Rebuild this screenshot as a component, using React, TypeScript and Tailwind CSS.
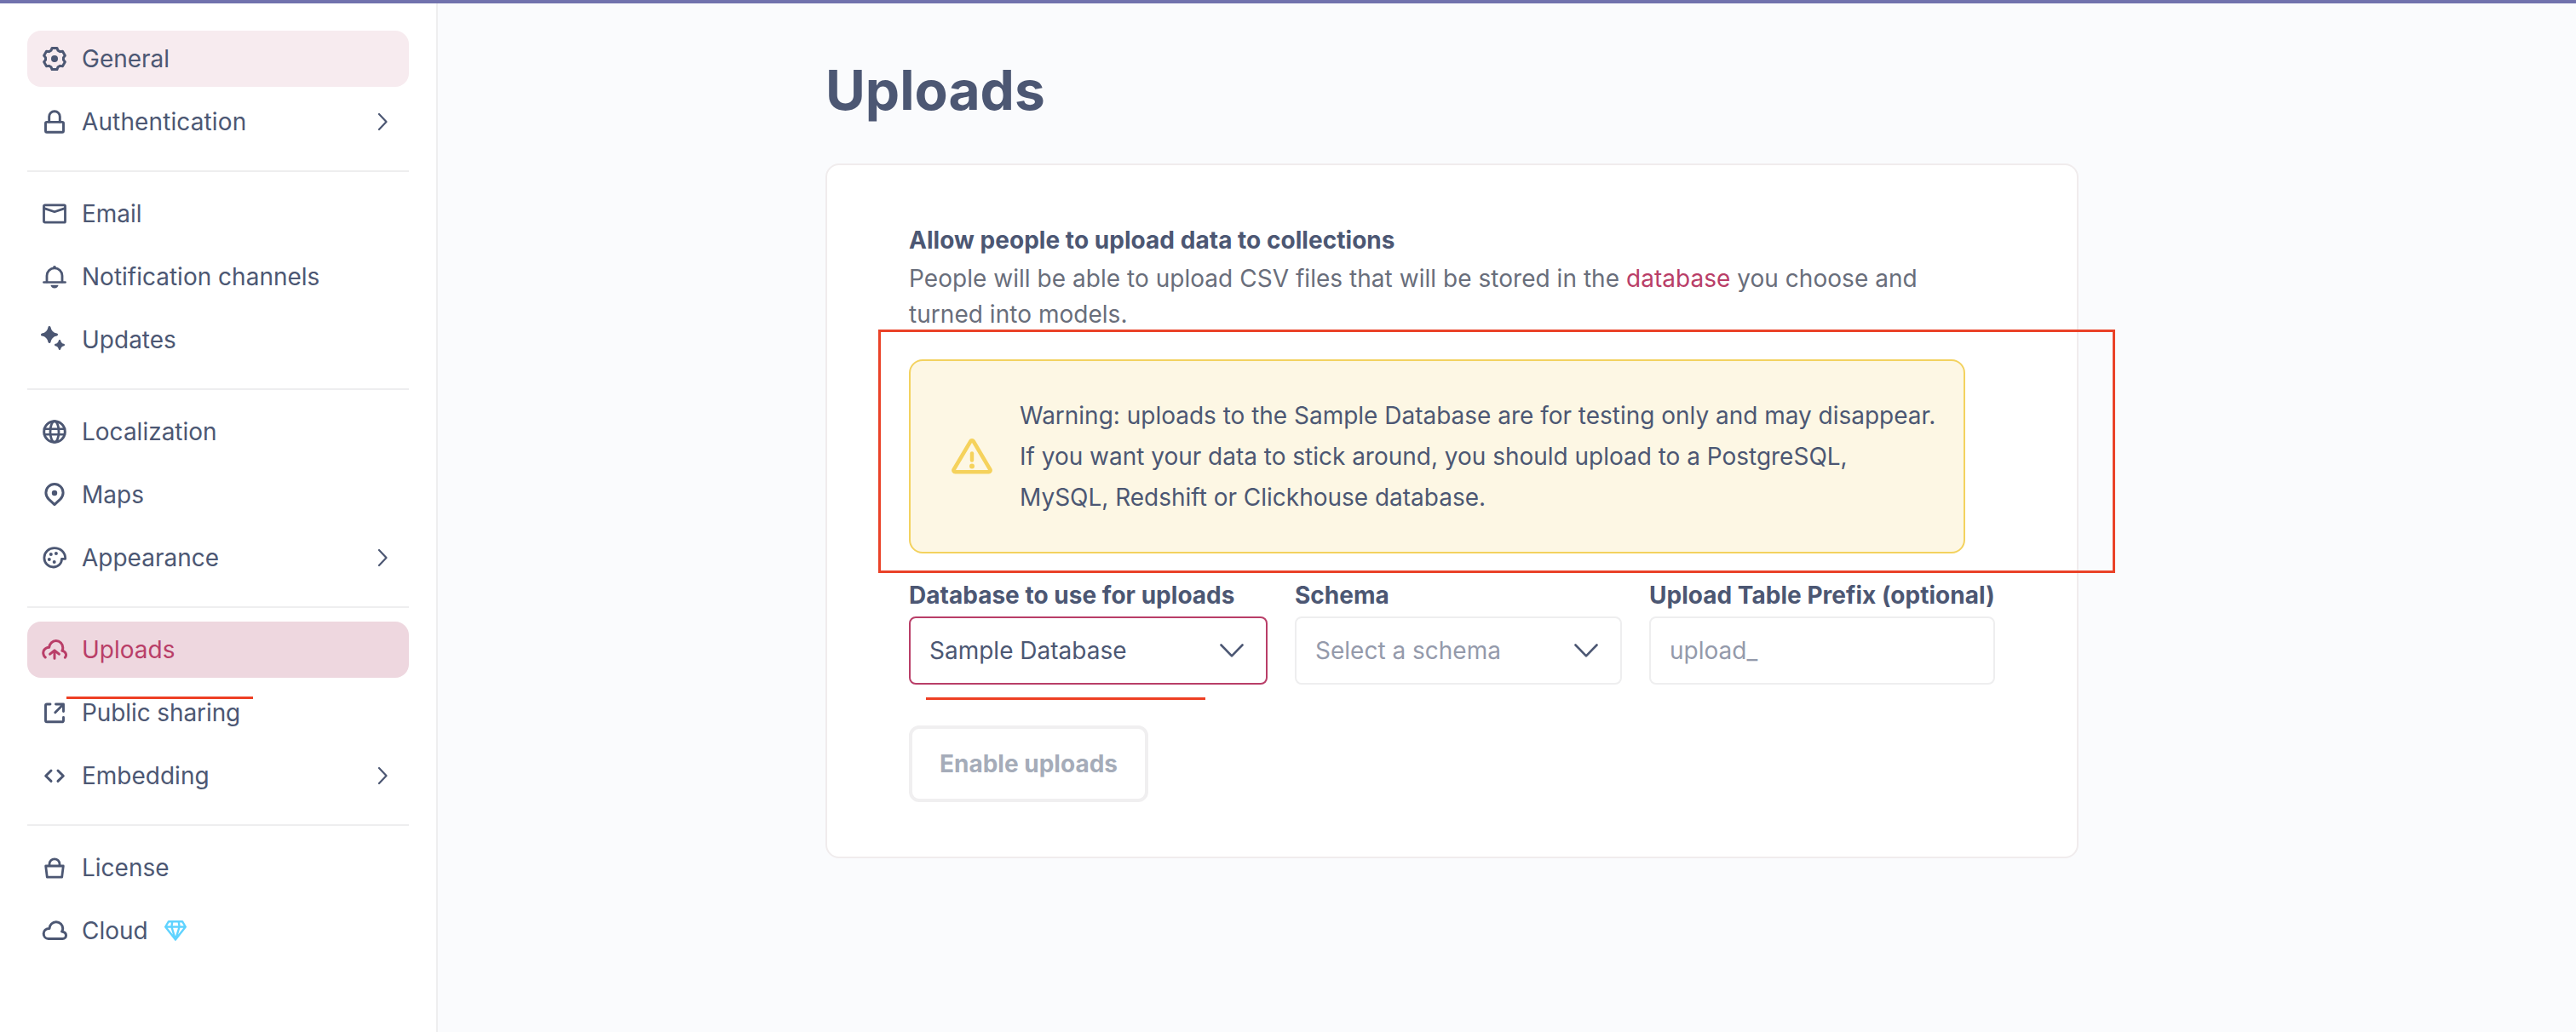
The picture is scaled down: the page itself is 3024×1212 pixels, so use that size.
import type { ReactNode } from "react";

function Icon({ children, w = 3 }: { children: ReactNode; w?: number }) {
  return (
    <svg
      viewBox="0 0 32 32"
      className="size-8 shrink-0"
      fill="none"
      stroke="currentColor"
      strokeWidth={w}
      strokeLinejoin="round"
      strokeLinecap="round"
    >
      {children}
    </svg>
  );
}

// Six-lobed gear outline, one lobe every 60 degrees.
const gearPoints = [0, 60, 120, 180, 240, 300]
  .flatMap((deg) => {
    const a = (deg * Math.PI) / 180;
    const lobe = [
      [-4, -9.8],
      [-2.9, -12.6],
      [2.9, -12.6],
      [4, -9.8],
    ];
    return lobe.map(([x, y]) =>
      [16 + x * Math.cos(a) - y * Math.sin(a), 16 + x * Math.sin(a) + y * Math.cos(a)]
        .map((n) => n.toFixed(2))
        .join(","),
    );
  })
  .join(" ");

const icons = {
  gear: (
    <Icon>
      <polygon points={gearPoints} />
      <circle cx="16" cy="16" r="4" fill="currentColor" stroke="none" />
    </Icon>
  ),
  lock: (
    <Icon w={2.9}>
      <rect x="5.5" y="16.4" width="21" height="11.8" rx="1.4" />
      <path d="M9.7 16V10a6.3 6.3 0 0 1 12.6 0v6" />
    </Icon>
  ),
  mail: (
    <Icon w={2.8}>
      <rect x="3.5" y="5.8" width="25" height="20.4" rx="1.2" />
      <path d="M3.8 9.6 16 13.8l12.2-4.2" />
    </Icon>
  ),
  bell: (
    <Icon w={2.8}>
      <path d="M7 22v-7.2a9 9 0 0 1 18 0V22" />
      <path d="M3.4 22.4h25.2" strokeWidth="2.5" />
      <path d="M11.4 25.8h9.2c-.4 2.3-2.2 3.8-4.6 3.8s-4.200-1.500-4.600-3.800z" fill="currentColor" stroke="none" />
      <circle cx="16" cy="4.900" r="1.900" fill="currentColor" stroke="none" />
    </Icon>
  ),
  sparkles: (
    <Icon w={3}>
      <path d="M10 1.500Q11.300 8.700 18.500 10Q11.300 11.300 10 18.500Q8.700 11.300 1.500 10Q8.700 8.700 10 1.500Z" fill="currentColor" />
      <path d="M22 17.200Q22.800 21.200 26.800 22Q22.800 22.800 22 26.800Q21.200 22.800 17.200 22Q21.200 21.200 22 17.200Z" fill="currentColor" strokeWidth="2.400" />
    </Icon>
  ),
  globe: (
    <Icon w={3}>
      <circle cx="16" cy="16" r="12.300" />
      <ellipse cx="16" cy="16" rx="5" ry="12.300" strokeWidth="2.800" />
      <path d="M4 12.700h24M4 19.300h24" strokeWidth="2.600" />
    </Icon>
  ),
  pin: (
    <Icon w={3}>
      <path d="m16 27.700-6.400-6C7.200 19.300 5.900 16.700 5.900 13.700a10.100 10.100 0 0 1 20.200 0c0 3-1.300 5.600-3.700 8z" />
      <circle cx="16" cy="14" r="3.200" fill="currentColor" stroke="none" />
    </Icon>
  ),
  palette: (
    <Icon w={2.800}>
      <path d="M28.700 17.300C28.700 9.500 23 4.700 15.800 4.700 9 4.700 3.900 9.800 3.900 16c0 6.200 4.700 11 10.700 11 5.600 0 9.900-4 9.900-9.700z" />
      <g fill="currentColor" stroke="none">
        <circle cx="11.800" cy="11.900" r="2" />
        <circle cx="17.900" cy="10.900" r="2" />
        <circle cx="9.800" cy="18" r="2" />
        <circle cx="15.700" cy="21" r="2" />
      </g>
    </Icon>
  ),
  upload: (
    <Icon w={3}>
      <path d="M5.200 25C2.600 23 1.900 18.600 4 16c1.500-1.900 3.600-2.600 5.700-2.700C10.100 9 13.500 5.600 17.700 5.600c4.700 0 8.100 3.600 8.100 8.200 0 1.300-.3 2.400-.9 3.400 4.200.8 5.900 4.900 3.500 8" />
      <path d="M16 26.300v-9.300M10.700 21.200 16 16.800l5.300 4.400" />
    </Icon>
  ),
  external: (
    <Icon w={2.900}>
      <path d="M11 6H7a1.500 1.500 0 0 0-1.500 1.500v17.800a1.500 1.500 0 0 0 1.500 1.500h18a1.500 1.500 0 0 0 1.500-1.500V21.500" />
      <path d="M17.500 6h9v8.500M26 6.500l-9.200 9.200" />
    </Icon>
  ),
  code: (
    <Icon w={3}>
      <path d="m12 10-6.300 6.200 6.300 6.200M20 10l6.300 6.200-6.300 6.200" />
    </Icon>
  ),
  bag: (
    <Icon w={2.800}>
      <path d="M5.700 14h20.600L24.700 27.200H7.300z" />
      <path d="M10 13.500v-1.700a6 6 0 0 1 12 0v1.700" />
    </Icon>
  ),
  cloud: (
    <Icon w={3}>
      <path d="M8.700 25.500h16.800c2.500 0 4-1.800 4-4 0-2.300-1.900-4-4.900-4.500.9-1 1.100-2.200 1.100-3.500 0-4.300-3.400-7.700-7.800-7.700-4.300 0-7.700 3.400-7.900 7.700-4 0-6.800 2.600-6.800 6 0 3.500 2.500 6 5.500 6z" />
    </Icon>
  ),
};

function Gem() {
  return (
    <svg
      viewBox="0 0 26 24"
      className="ml-[3px] h-6 w-[26px] shrink-0 text-[#5fd3ff]"
      fill="none"
      stroke="currentColor"
      strokeWidth="2.400"
      strokeLinejoin="round"
    >
      <path d="M5 1.200h16l3.800 6.300L13 22.600 1.200 7.500zM1.200 7.500h23.600M9.300 1.200 8.400 7.500 13 22.600l4.600-15.100-.9-6.300" />
    </svg>
  );
}

function NavItem({
  icon,
  label,
  arrow,
  tone = "",
  extra,
}: {
  icon: ReactNode;
  label: string;
  arrow?: boolean;
  tone?: string;
  extra?: ReactNode;
}) {
  return (
    <a className={`flex h-[66px] items-center gap-4 rounded-2xl px-4 ${tone}`}>
      {icon}
      <span>{label}</span>
      {extra}
      {arrow && (
        <svg
          viewBox="0 0 12 22"
          className="mr-[9px] ml-auto h-[22px] w-3"
          fill="none"
          stroke="currentColor"
          strokeWidth="2.2"
          strokeLinecap="round"
          strokeLinejoin="round"
        >
          <path d="m2 2 8.500 9L2 20" />
        </svg>
      )}
    </a>
  );
}

function Group({ children, last }: { children: ReactNode; last?: boolean }) {
  return (
    <div className={last ? "flex flex-col gap-2" : "mb-4 flex flex-col gap-2 border-b-2 border-[#eeeeef] pb-6"}>
      {children}
    </div>
  );
}

function Field({ label, width, children, box }: { label: string; width: string; children: ReactNode; box: string }) {
  return (
    <div className={`flex shrink-0 flex-col gap-1 ${width}`}>
      <label className="leading-[42px] font-bold tracking-[0.02px] whitespace-nowrap">{label}</label>
      <div className={`flex h-20 items-center justify-between rounded-lg border-2 pr-[26px] pl-[22px] ${box}`}>
        {children}
      </div>
    </div>
  );
}

function Chevron() {
  return (
    <svg
      viewBox="0 0 28 16"
      className="h-4 w-7 text-[#4c5773]"
      fill="none"
      stroke="currentColor"
      strokeWidth="2.600"
      strokeLinecap="round"
      strokeLinejoin="round"
    >
      <path d="M1.500 1.500 14 14.300 26.500 1.500" />
    </svg>
  );
}

export default function App() {
  return (
    <div className="relative flex h-[1212px] w-[3024px] flex-col overflow-hidden bg-[#fafbfd] font-['Inter',sans-serif] text-[28px] text-[#4c5773]">
      <div className="h-1 shrink-0 bg-[#7172ad]" />
      <div className="flex flex-1">
        <nav className="w-[514px] shrink-0 border-r-2 border-[#eeeeef] bg-white px-8 pt-8">
          <Group>
            <NavItem icon={icons.gear} label="General" tone="bg-[#f7ebef]" />
            <NavItem icon={icons.lock} label="Authentication" tone="tracking-[0.12px]" arrow />
          </Group>
          <Group>
            <NavItem icon={icons.mail} label="Email" />
            <NavItem icon={icons.bell} label="Notification channels" />
            <NavItem icon={icons.sparkles} label="Updates" />
          </Group>
          <Group>
            <NavItem icon={icons.globe} label="Localization" />
            <NavItem icon={icons.pin} label="Maps" />
            <NavItem icon={icons.palette} label="Appearance" arrow />
          </Group>
          <Group>
            <NavItem icon={icons.upload} label="Uploads" tone="bg-[#eed7df] text-[#b93e68]" />
            <NavItem icon={icons.external} label="Public sharing" tone="tracking-[-0.1px]" />
            <NavItem icon={icons.code} label="Embedding" arrow />
          </Group>
          <Group last>
            <NavItem icon={icons.bag} label="License" />
            <NavItem icon={icons.cloud} label="Cloud" extra={<Gem />} />
          </Group>
        </nav>

        <main className="pt-[70px] pl-[455px]">
          <h1 className="text-[64px] leading-[64px] font-bold">Uploads</h1>
          <section className="mt-[54px] h-[816px] w-[1471px] rounded-2xl border-2 border-[#f0eced] bg-white px-24 pt-[67px]">
            <h2 className="leading-[42px] font-bold tracking-[0.04px]">Allow people to upload data to collections</h2>
            <p className="mt-[3px] w-[1240px] leading-[42px] tracking-[0.035px] text-[#696e7b]">
              People will be able to upload CSV files that will be stored in the{" "}
              <a className="text-[#b93e68]">database</a> you choose and
              <br />
              turned into models.
            </p>

            <div className="mt-8 flex h-[228px] w-[1240px] items-center gap-8 rounded-2xl border-2 border-[#f3d25f] bg-[#fdf7e4] pl-12">
              <svg
                viewBox="0 0 48 48"
                className="size-12 shrink-0 text-[#f5d25c]"
                fill="none"
                stroke="currentColor"
                strokeWidth="4.600"
                strokeLinejoin="round"
                strokeLinecap="round"
              >
                <path d="M22.300 6.300a2 2 0 0 1 3.400 0L45.300 39.300a2 2 0 0 1-1.700 3H4.400a2 2 0 0 1-1.700-3z" />
                <path d="M24 20.500v8" strokeWidth="4.400" />
                <circle cx="24" cy="35.500" r="3" fill="currentColor" stroke="none" />
              </svg>
              <p className="leading-[48px] tracking-[-0.015px] whitespace-nowrap">
                Warning: uploads to the Sample Database are for testing only and may disappear.
                <br />
                If you want your data to stick around, you should upload to a PostgreSQL,
                <br />
                MySQL, Redshift or Clickhouse database.
              </p>
            </div>

            <div className="mt-7 flex gap-8">
              <Field label="Database to use for uploads" width="w-[421px]" box="border-[#b93e68]">
                <span>Sample Database</span>
                <Chevron />
              </Field>
              <Field label="Schema" width="w-[384px]" box="border-[#eeeeef]">
                <span className="text-[#949aab]">Select a schema</span>
                <Chevron />
              </Field>
              <Field label="Upload Table Prefix (optional)" width="w-[406px]" box="border-[#eeeeef]">
                <span className="text-[#949aab]">upload_</span>
              </Field>
            </div>

            <button className="mt-12 flex h-[90px] w-[281px] items-center justify-center rounded-xl border-4 border-[#f0eff0] font-bold text-[#a5acb9]">
              Enable uploads
            </button>
          </section>
        </main>
      </div>

      {/* Annotation marks drawn over the page */}
      <div className="absolute top-[387px] left-[1031px] h-[286px] w-[1452px] border-3 border-[#ea4228]" />
      <div className="absolute top-[818px] left-[78px] h-[3px] w-[219px] bg-[#ee3f24]" />
      <div className="absolute top-[819px] left-[1087px] h-[3px] w-[328px] bg-[#ee3f24]" />
    </div>
  );
}
